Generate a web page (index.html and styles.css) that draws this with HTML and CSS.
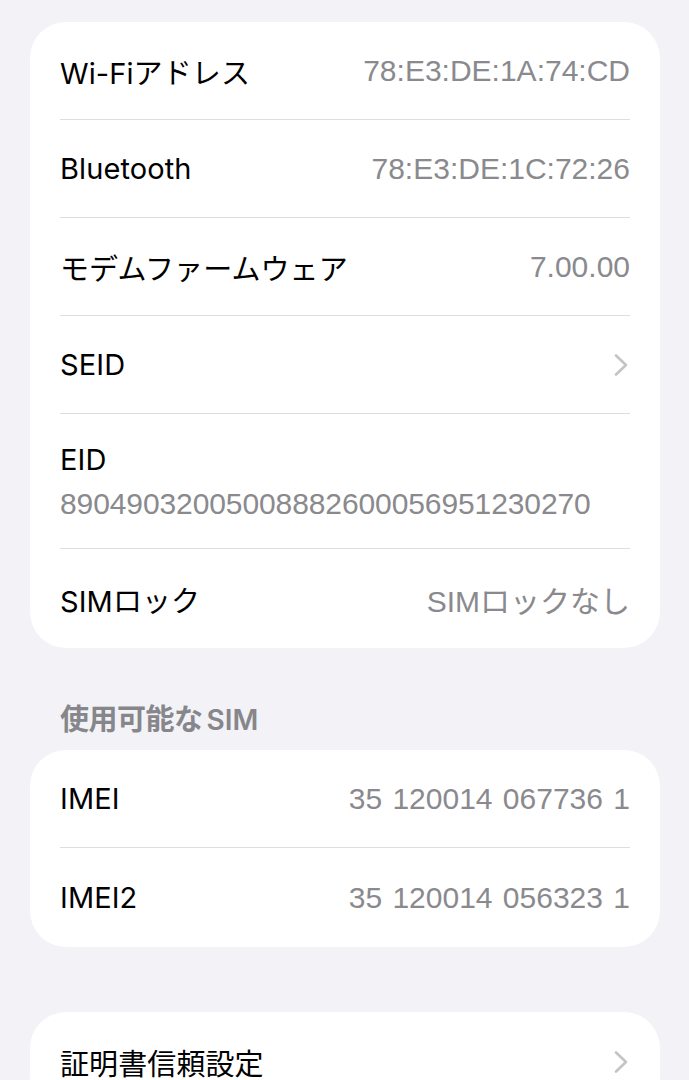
FILE: index.html
```html
<!DOCTYPE html>
<html lang="ja">
<head>
<meta charset="utf-8">
<link rel="stylesheet" href="styles.css">
</head>
<body>
<main class="page">
  <section class="card">
    <div class="row"><div class="inner"><span class="label">Wi-Fiアドレス</span><span class="value">78:E3:DE:1A:74:CD</span></div></div>
    <div class="row"><div class="inner"><span class="label">Bluetooth</span><span class="value">78:E3:DE:1C:72:26</span></div></div>
    <div class="row"><div class="inner"><span class="label">モデムファームウェア</span><span class="value">7.00.00</span></div></div>
    <div class="row"><div class="inner"><span class="label">SEID</span>
      <svg class="chev" width="16" height="24" viewBox="0 0 16 24"><path d="M3 2.5 L13 12 L3 21.5" fill="none" stroke="#c4c4c8" stroke-width="2.6" stroke-linecap="round" stroke-linejoin="round"/></svg>
    </div></div>
    <div class="row"><div class="inner stack"><span class="label">EID</span><span class="value sub">89049032005008882600056951230270</span></div></div>
    <div class="row last"><div class="inner"><span class="label">SIMロック</span><span class="value">SIMロックなし</span></div></div>
  </section>

  <h2 class="header">使用可能な<span class="header-latin">SIM</span></h2>
  <section class="card">
    <div class="row"><div class="inner"><span class="label">IMEI</span><span class="value spaced">35 120014 067736 1</span></div></div>
    <div class="row last"><div class="inner"><span class="label">IMEI2</span><span class="value spaced">35 120014 056323 1</span></div></div>
  </section>

  <section class="card card3">
    <div class="row last"><div class="inner"><span class="label">証明書信頼設定</span>
      <svg class="chev" width="16" height="24" viewBox="0 0 16 24"><path d="M3 2.5 L13 12 L3 21.5" fill="none" stroke="#c4c4c8" stroke-width="2.6" stroke-linecap="round" stroke-linejoin="round"/></svg>
    </div></div>
  </section>
</main>
</body>
</html>
```
FILE: styles.css
```css
html, body {
  margin: 0;
  padding: 0;
  background: #f2f2f7;
}
body {
  font-family: Inter, "Noto Sans CJK JP", sans-serif;
  -webkit-font-smoothing: antialiased;
  height: 1080px;
  overflow: hidden;
}
.page {
  padding: 22px 29px 0 30px;
  display: flex;
  flex-direction: column;
}
.card {
  background: #ffffff;
  border-radius: 36px;
  overflow: hidden;
}
.row {
  padding: 0 30px;
}
.inner {
  height: 97px;
  border-bottom: 1px solid #dedee2;
  display: flex;
  align-items: center;
  justify-content: space-between;
}
.row.last .inner {
  border-bottom: none;
  height: 99px;
}
.inner.stack {
  height: 134px;
  flex-direction: column;
  align-items: flex-start;
  justify-content: center;
  gap: 10px;
}
.label {
  font-size: 29px;
  color: #000;
  letter-spacing: 0.1px;
}
.value {
  font-family: "Liberation Sans", "Noto Sans CJK JP", sans-serif;
  font-size: 30px;
  color: #8a8a8e;
  letter-spacing: 0;
}
.value.sub {
  letter-spacing: -0.1px;
}
.value.spaced {
  word-spacing: 2px;
}
.chev {
  margin-right: 1px;
}
.header {
  margin: 0;
  padding: 54px 30px 12px;
  font-size: 29px;
  font-weight: 600;
  color: #86868b;
  line-height: 36px;
  letter-spacing: -0.5px;
}
.header-latin {
  font-size: 28px;
  font-weight: 600;
  letter-spacing: 0;
  margin-left: 4px;
}
.card3 {
  margin-top: 65px;
}
```
